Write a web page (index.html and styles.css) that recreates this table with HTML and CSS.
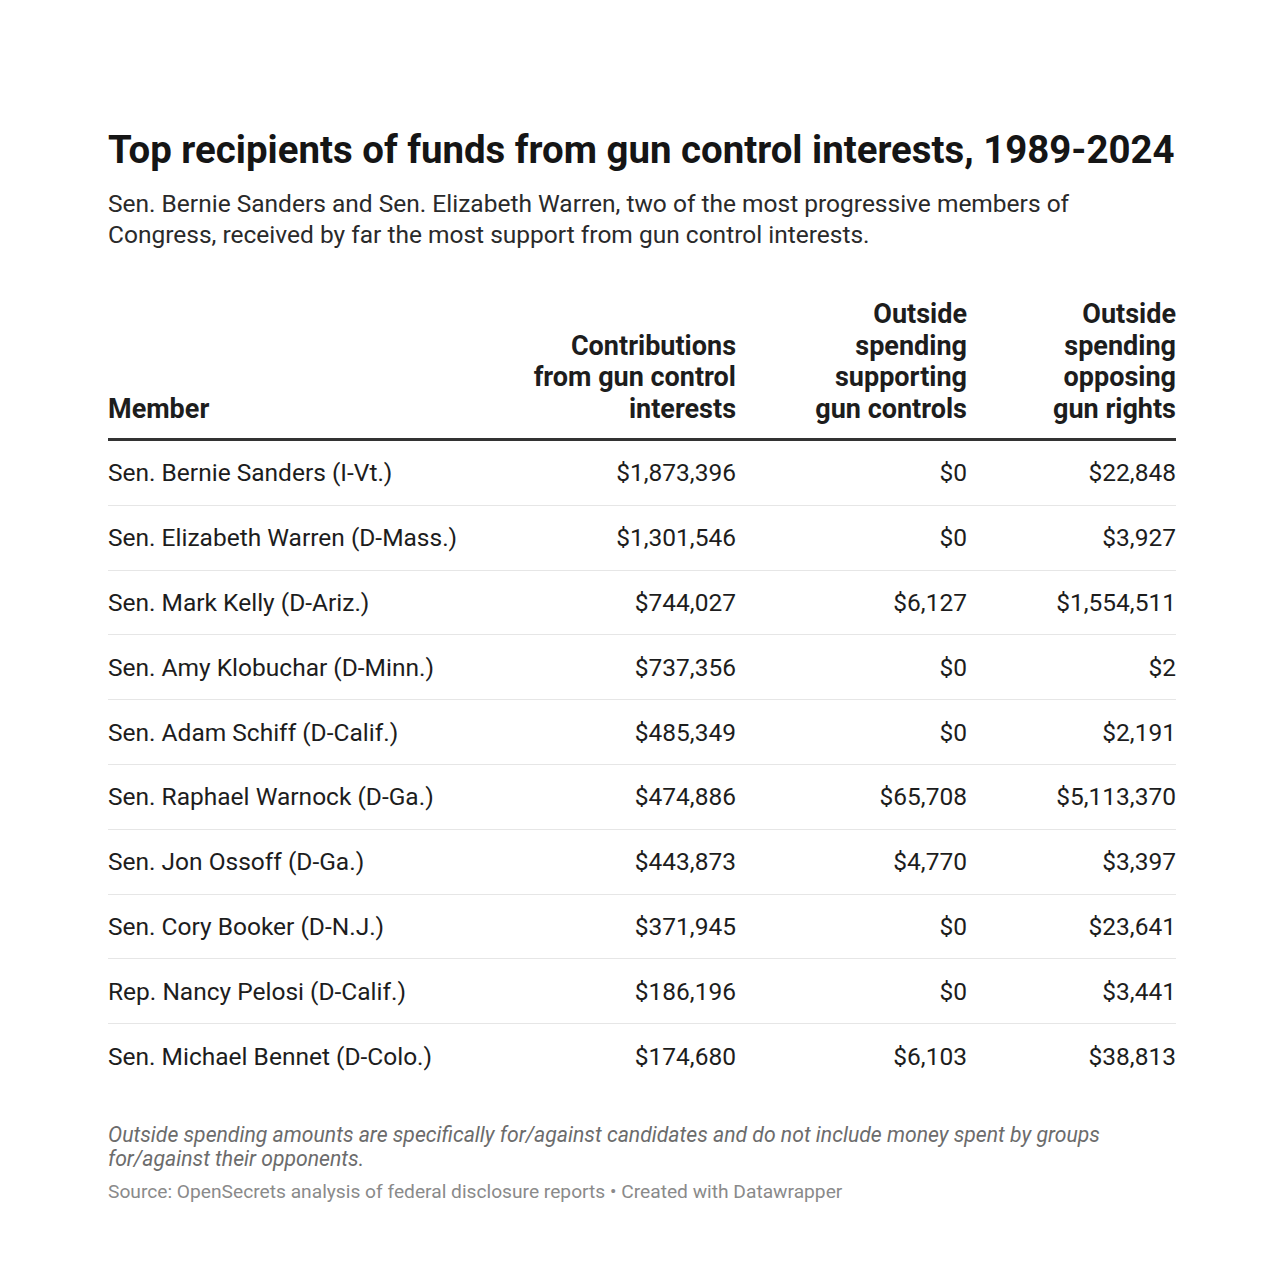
FILE: index.html
```html
<!DOCTYPE html>
<html>
<head>
<meta charset="utf-8">
<link rel="stylesheet" href="styles.css">
</head>
<body>
<div class="chart">
  <h1 class="title">Top recipients of funds from gun control interests, 1989-2024</h1>
  <p class="desc">Sen. Bernie Sanders and Sen. Elizabeth Warren, two of the most progressive members of Congress, received by far the most support from gun control interests.</p>
  <table class="tbl">
    <colgroup>
      <col class="c1"><col class="c2"><col class="c3"><col class="c4">
    </colgroup>
    <thead>
      <tr>
        <th class="left">Member</th>
        <th>Contributions<br>from gun control<br>interests</th>
        <th>Outside<br>spending<br>supporting<br>gun controls</th>
        <th>Outside<br>spending<br>opposing<br>gun rights</th>
      </tr>
    </thead>
    <tbody>
      <tr><td class="left">Sen. Bernie Sanders (I-Vt.)</td><td>$1,873,396</td><td>$0</td><td>$22,848</td></tr>
      <tr><td class="left">Sen. Elizabeth Warren (D-Mass.)</td><td>$1,301,546</td><td>$0</td><td>$3,927</td></tr>
      <tr><td class="left">Sen. Mark Kelly (D-Ariz.)</td><td>$744,027</td><td>$6,127</td><td>$1,554,511</td></tr>
      <tr><td class="left">Sen. Amy Klobuchar (D-Minn.)</td><td>$737,356</td><td>$0</td><td>$2</td></tr>
      <tr><td class="left">Sen. Adam Schiff (D-Calif.)</td><td>$485,349</td><td>$0</td><td>$2,191</td></tr>
      <tr><td class="left">Sen. Raphael Warnock (D-Ga.)</td><td>$474,886</td><td>$65,708</td><td>$5,113,370</td></tr>
      <tr><td class="left">Sen. Jon Ossoff (D-Ga.)</td><td>$443,873</td><td>$4,770</td><td>$3,397</td></tr>
      <tr><td class="left">Sen. Cory Booker (D-N.J.)</td><td>$371,945</td><td>$0</td><td>$23,641</td></tr>
      <tr><td class="left">Rep. Nancy Pelosi (D-Calif.)</td><td>$186,196</td><td>$0</td><td>$3,441</td></tr>
      <tr class="last"><td class="left">Sen. Michael Bennet (D-Colo.)</td><td>$174,680</td><td>$6,103</td><td>$38,813</td></tr>
    </tbody>
  </table>
  <p class="notes">Outside spending amounts are specifically for/against candidates and do not include money spent by groups for/against their opponents.</p>
  <p class="source">Source: OpenSecrets analysis of federal disclosure reports • Created with Datawrapper</p>
</div>
</body>
</html>
```

FILE: styles.css
```css
html, body {
  margin: 0;
  padding: 0;
  background: #ffffff;
}
body {
  font-family: Roboto, "Liberation Sans", sans-serif;
  color: #1d1d1d;
}
.chart {
  width: 1068px;
  margin: 0 0 0 108px;
  padding-top: 127px;
}
.title {
  font-size: 38.4px;
  font-weight: 700;
  line-height: 46px;
  margin: 0;
  color: #151515;
  white-space: nowrap;
}
.desc {
  font-size: 24.5px;
  line-height: 31px;
  margin: 15px 0 0 0;
  color: #2a2a2a;
  width: 1010px;
}
.tbl {
  width: 1068px;
  border-collapse: collapse;
  margin-top: 49px;
  font-size: 24.5px;
}
.c1 { width: 400px; }
.c2 { width: 228px; }
.c3 { width: 231px; }
.c4 { width: 209px; }
.tbl th {
  font-weight: 700;
  font-size: 27px;
  line-height: 31.5px;
  text-align: right;
  vertical-align: bottom;
  padding: 0 0 13px 0;
  border-bottom: 3px solid #333;
  color: #1d1d1d;
}
.tbl td {
  text-align: right;
  height: 63.8px;
  padding: 0;
  border-bottom: 1px solid #e6e6e6;
  color: #1d1d1d;
}
.tbl .left { text-align: left; }
.tbl tr.last td { border-bottom: none; }
.notes {
  font-style: italic;
  font-size: 21.2px;
  line-height: 24px;
  color: #6c6c6c;
  margin: 35px 0 0 0;
  width: 1020px;
}
.source {
  font-size: 19.2px;
  line-height: 24px;
  color: #8a8a8a;
  margin: 9px 0 0 0;
}
```
